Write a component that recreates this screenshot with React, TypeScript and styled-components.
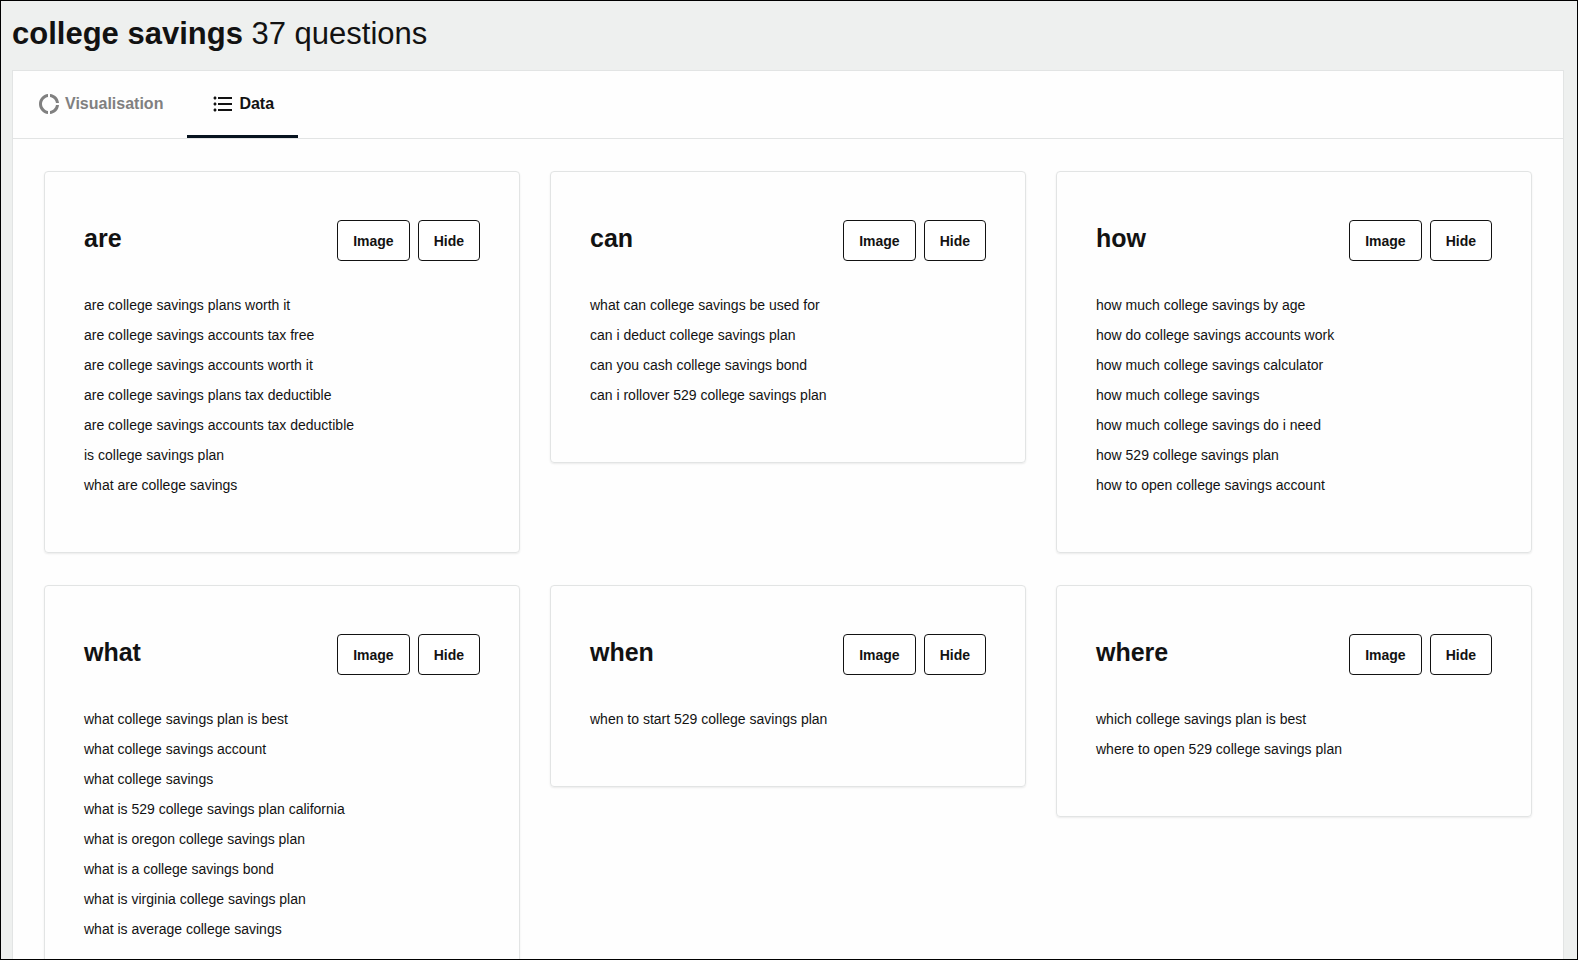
import React, { useState } from "react";
import styled, { createGlobalStyle } from "styled-components";
import { MdDonutLarge, MdFormatListBulleted } from "react-icons/md";

const GlobalStyle = createGlobalStyle`
  * {
    box-sizing: border-box;
  }

  body {
    margin: 0;
    background: #eef0ef;
    color: #121212;
    font-family: "Liberation Sans", Arial, sans-serif;
    font-size: 14px;
  }
`;

const Page = styled.main`
  height: 100vh;
  overflow: hidden;
  padding: 14px 13px 0 11px;
  border: 1px solid #000;
`;

const PageTitle = styled.h1`
  margin: 0 0 17px;
  font-size: 31px;
  line-height: 38px;
  font-weight: 400;
`;

const Panel = styled.section`
  background: #fefefe;
  border: 1px solid #e2e4e4;
`;

const TabBar = styled.div`
  display: flex;
  border-bottom: 1px solid #e2e4e4;
`;

const Tab = styled.button<{ $active: boolean }>`
  display: flex;
  align-items: center;
  gap: 4px;
  height: 67px;
  padding: 0 24px;
  border: 0;
  border-top: 1px solid transparent;
  border-bottom: 3px solid ${({ $active }) => ($active ? "#07131f" : "transparent")};
  background: none;
  color: ${({ $active }) => ($active ? "#121212" : "#808080")};
  font: 700 16px/24px "Liberation Sans", Arial, sans-serif;
  cursor: pointer;
`;

const CardGrid = styled.div`
  display: grid;
  grid-template-columns: repeat(3, minmax(0, 1fr));
  align-items: start;
  gap: 32px 30px;
  padding: 32px 31px;
`;

const Card = styled.article`
  padding: 48px 39px 52px;
  border: 1px solid #e2e4e4;
  border-radius: 4px;
  box-shadow: 0 1px 2px rgba(0, 0, 0, 0.08);
`;

const CardHeader = styled.header`
  display: flex;
  align-items: flex-start;
  justify-content: space-between;
  margin-bottom: 29px;
`;

const CardTitle = styled.h2`
  margin: 0;
  font-size: 25px;
  line-height: 36px;
  font-weight: 700;
`;

const Actions = styled.div`
  display: flex;
  gap: 8px;
`;

const ActionButton = styled.button`
  height: 41px;
  padding: 0 15px;
  border: 1px solid #121212;
  border-radius: 4px;
  background: #fff;
  color: #121212;
  font: 700 14px/20px "Liberation Sans", Arial, sans-serif;
  cursor: pointer;
`;

const QuestionList = styled.ul`
  margin: 0;
  padding: 0;
  list-style: none;
`;

const Question = styled.li`
  line-height: 30px;
`;

const groups = [
  {
    title: "are",
    questions: [
      "are college savings plans worth it",
      "are college savings accounts tax free",
      "are college savings accounts worth it",
      "are college savings plans tax deductible",
      "are college savings accounts tax deductible",
      "is college savings plan",
      "what are college savings",
    ],
  },
  {
    title: "can",
    questions: [
      "what can college savings be used for",
      "can i deduct college savings plan",
      "can you cash college savings bond",
      "can i rollover 529 college savings plan",
    ],
  },
  {
    title: "how",
    questions: [
      "how much college savings by age",
      "how do college savings accounts work",
      "how much college savings calculator",
      "how much college savings",
      "how much college savings do i need",
      "how 529 college savings plan",
      "how to open college savings account",
    ],
  },
  {
    title: "what",
    questions: [
      "what college savings plan is best",
      "what college savings account",
      "what college savings",
      "what is 529 college savings plan california",
      "what is oregon college savings plan",
      "what is a college savings bond",
      "what is virginia college savings plan",
      "what is average college savings",
    ],
  },
  { title: "when", questions: ["when to start 529 college savings plan"] },
  {
    title: "where",
    questions: ["which college savings plan is best", "where to open 529 college savings plan"],
  },
];

const tabs = [
  { id: "visualisation", label: "Visualisation", Icon: MdDonutLarge },
  { id: "data", label: "Data", Icon: MdFormatListBulleted },
];

export default function App() {
  const [activeTab, setActiveTab] = useState("data");

  return (
    <>
      <GlobalStyle />
      <Page>
        <PageTitle>
          <strong>college savings</strong> 37 questions
        </PageTitle>
        <Panel>
          <TabBar role="tablist">
            {tabs.map(({ id, label, Icon }) => (
              <Tab
                key={id}
                type="button"
                role="tab"
                aria-selected={activeTab === id}
                $active={activeTab === id}
                onClick={() => setActiveTab(id)}
              >
                <Icon size={24} aria-hidden />
                {label}
              </Tab>
            ))}
          </TabBar>
          <CardGrid>
            {groups.map(({ title, questions }) => (
              <Card key={title}>
                <CardHeader>
                  <CardTitle>{title}</CardTitle>
                  <Actions>
                    <ActionButton type="button">Image</ActionButton>
                    <ActionButton type="button">Hide</ActionButton>
                  </Actions>
                </CardHeader>
                <QuestionList>
                  {questions.map((question) => (
                    <Question key={question}>{question}</Question>
                  ))}
                </QuestionList>
              </Card>
            ))}
          </CardGrid>
        </Panel>
      </Page>
    </>
  );
}
